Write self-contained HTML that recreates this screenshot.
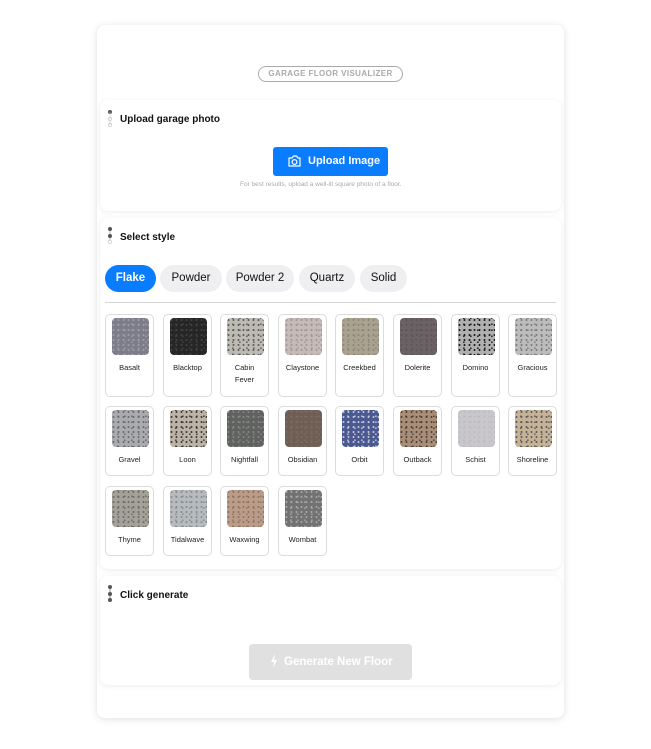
<!DOCTYPE html>
<html><head><style>
*{margin:0;padding:0;box-sizing:border-box}
body{width:651px;height:749px;background:#fff;font-family:"Liberation Sans",sans-serif;position:relative;overflow:hidden}
.abs{position:absolute}
.outer{left:97px;top:25px;width:467px;height:693px;background:#fff;border-radius:8px;box-shadow:0 1px 8px rgba(0,0,0,.13)}
.sec{left:100px;width:461px;background:#fff;border-radius:8px;box-shadow:0 1px 6px rgba(0,0,0,.08)}
.title{font-size:10px;font-weight:bold;color:#111}
.pill{top:265px;height:27px;border-radius:14px;background:#efeff1;font-size:11.5px;color:#111;text-align:center;line-height:27px}
.card{width:49px;border:1px solid #dcdcdc;border-radius:5px;background:#fff}
.sw{position:absolute;left:6px;top:3px;width:37px;height:37px;border-radius:4px}
.lb{position:absolute;left:0;right:0;top:47px;font-size:7.5px;color:#222;text-align:center;line-height:12px}
</style></head><body>
<div class="abs outer"></div>
<div class="abs" style="left:258px;top:66px;width:145px;height:16px;border:1px solid #aaa;border-radius:9px;font-size:8px;font-weight:bold;color:#aaa;text-align:center;line-height:14px;letter-spacing:.4px">GARAGE FLOOR VISUALIZER</div>

<div class="abs sec" style="top:100px;height:111px"></div>
<svg class="abs" style="left:107px;top:109px" width="6" height="20"><circle cx="3" cy="3" r="2" fill="#555"/><circle cx="3" cy="10" r="1.7" fill="none" stroke="#ccc" stroke-width=".8"/><circle cx="3" cy="16" r="1.7" fill="none" stroke="#ccc" stroke-width=".8"/><line x1="3" y1="3" x2="3" y2="16" stroke="#ccc" stroke-width=".6"/></svg>
<div class="abs title" style="left:120px;top:114px">Upload garage photo</div>
<div class="abs" style="left:273px;top:147px;width:115px;height:29px;background:#0a7cff;border-radius:3px;color:#fff;font-size:11px;font-weight:bold;line-height:29px;padding-left:35px">Upload Image</div>
<svg class="abs" style="left:287px;top:154px" width="15" height="14" viewBox="0 0 15 14"><path d="M2 4h3l1.5-2h3L11 4h2v8H2z" fill="none" stroke="#fff" stroke-width="1.2" stroke-linejoin="round"/><circle cx="7.5" cy="8" r="2.4" fill="none" stroke="#fff" stroke-width="1.2"/></svg>
<div class="abs" style="left:240px;top:181px;font-size:6.5px;color:#aaa">For best results, upload a well-lit square photo of a floor.</div>

<div class="abs sec" style="top:218px;height:351px"></div>
<svg class="abs" style="left:107px;top:226px" width="6" height="20"><line x1="3" y1="3" x2="3" y2="16" stroke="#999" stroke-width=".7"/><circle cx="3" cy="3" r="2" fill="#555"/><circle cx="3" cy="10" r="2" fill="#555"/><circle cx="3" cy="16" r="1.7" fill="#fff" stroke="#ccc" stroke-width=".8"/></svg>
<div class="abs title" style="left:120px;top:232px">Select style</div>
<div class="abs pill" style="left:105px;width:51px;background:#0a7cff;color:#fff;font-weight:bold">Flake</div>
<div class="abs pill" style="left:160px;width:62px">Powder</div>
<div class="abs pill" style="left:226px;width:68px">Powder 2</div>
<div class="abs pill" style="left:299px;width:56px">Quartz</div>
<div class="abs pill" style="left:360px;width:47px">Solid</div>
<div class="abs" style="left:105px;top:302px;width:451px;height:1px;background:#d4d4d8"></div>

<div id="g"></div>

<div class="abs sec" style="top:576px;height:109px"></div>
<svg class="abs" style="left:107px;top:584px" width="6" height="20"><line x1="3" y1="3" x2="3" y2="16" stroke="#777" stroke-width=".8"/><circle cx="3" cy="3" r="2" fill="#555"/><circle cx="3" cy="10" r="2" fill="#555"/><circle cx="3" cy="16" r="2" fill="#555"/></svg>
<div class="abs title" style="left:120px;top:590px">Click generate</div>
<div class="abs" style="left:249px;top:644px;width:163px;height:36px;background:#e0e0e0;border-radius:4px;color:#fff;font-size:11.5px;font-weight:bold;line-height:36px;padding-left:35px">Generate New Floor</div>
<svg class="abs" style="left:270px;top:654px" width="8" height="14" viewBox="0 0 8 14"><path d="M5 0L1 8h3l-1 6 4-8H4z" fill="#fff"/></svg>

<script>
var d=[["Basalt","#7c7d88","#a0a1aa"],["Blacktop","#262626","#444"],["Cabin<br>Fever","#bcbab2","#555"],["Claystone","#c6bab6","#a09090"],["Creekbed","#aaa290","#8a8474"],["Dolerite","#6b6266","#5a5256"],["Domino","#b0b0b0","#111"],["Gracious","#bcbcbc","#777"],
["Gravel","#aaabae","#666"],["Loon","#bcb2a6","#333"],["Nightfall","#5f625e","#888"],["Obsidian","#6f5e53","#7e6e62"],["Orbit","#4a5a90","#ccd"],["Outback","#a88e78","#4a3a30"],["Schist","#c9c7cc","#bcbac0"],["Shoreline","#c6b296","#555"],
["Thyme","#a3a19a","#6a6860"],["Tidalwave","#b6bbbf","#888"],["Waxwing","#ba9c88","#8a7060"],["Wombat","#727272","#aaa"]];
var h="";d.forEach(function(e,i){var c=i%8,r=Math.floor(i/8);var x=Math.round(105+c*57.6);var y=[314,406,486][r];var hh=r==0?83:70;
h+='<div class="abs card" style="left:'+x+'px;top:'+y+'px;height:'+hh+'px"><div class="sw" style="background:radial-gradient(circle at 30% 40%,'+e[2]+' 0 .7px,transparent 1.2px) 0 0/5px 5px,radial-gradient(circle at 70% 70%,'+e[2]+' 0 .6px,transparent 1px) 1px 2px/7px 6px,'+e[1]+'"></div><div class="lb">'+e[0]+'</div></div>';});
document.getElementById("g").innerHTML=h;
</script>
</body></html>
